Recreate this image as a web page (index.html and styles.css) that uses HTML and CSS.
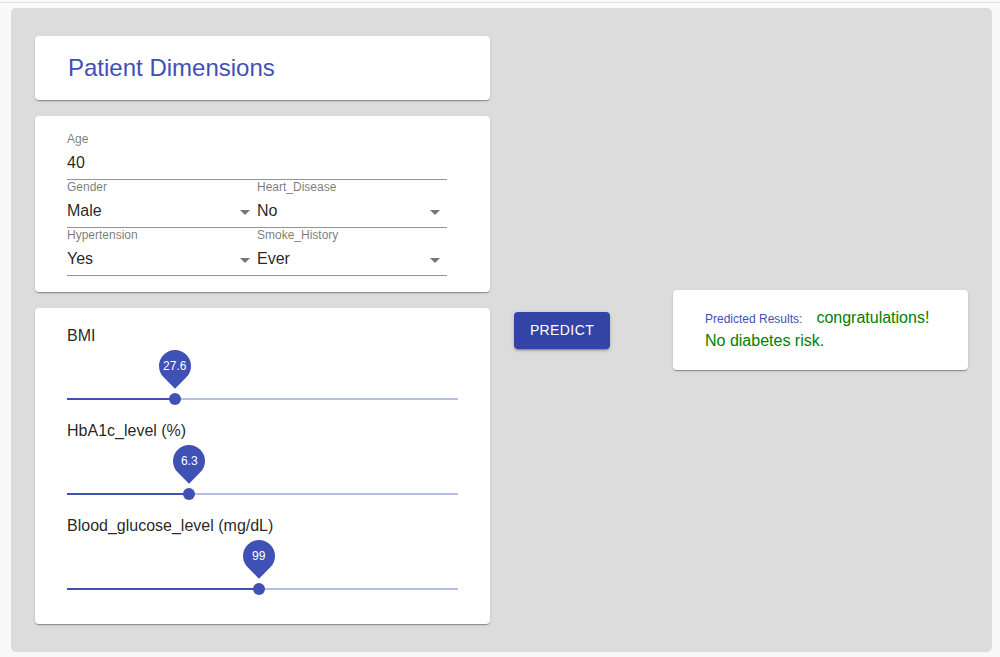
FILE: index.html
```html
<!DOCTYPE html>
<html>
<head>
<meta charset="utf-8">
<link rel="stylesheet" href="styles.css">
</head>
<body>
<div class="topbar"></div>
<div class="panel">
  <div class="left">
    <div class="card title-card">
      <h1 class="title">Patient Dimensions</h1>
    </div>
    <div class="card form-card">
      <div class="form">
        <div class="field">
          <div class="label">Age</div>
          <div class="input">40</div>
        </div>
        <div class="row">
          <div class="field select">
            <div class="label">Gender</div>
            <div class="input">Male<svg class="arrow" viewBox="0 0 24 24"><path d="M7 10l5 5 5-5z"/></svg></div>
          </div>
          <div class="field select">
            <div class="label">Heart_Disease</div>
            <div class="input">No<svg class="arrow" viewBox="0 0 24 24"><path d="M7 10l5 5 5-5z"/></svg></div>
          </div>
        </div>
        <div class="row">
          <div class="field select">
            <div class="label">Hypertension</div>
            <div class="input">Yes<svg class="arrow" viewBox="0 0 24 24"><path d="M7 10l5 5 5-5z"/></svg></div>
          </div>
          <div class="field select">
            <div class="label">Smoke_History</div>
            <div class="input">Ever<svg class="arrow" viewBox="0 0 24 24"><path d="M7 10l5 5 5-5z"/></svg></div>
          </div>
        </div>
      </div>
    </div>
    <div class="card slider-card">
      <div class="slider-label">BMI</div>
      <div class="slider">
        <div class="rail"></div>
        <div class="fill" style="width:27.6%"></div>
        <div class="thumb" style="left:27.6%"><div class="pin"><span>27.6</span></div></div>
      </div>
      <div class="slider-label">HbA1c_level (%)</div>
      <div class="slider">
        <div class="rail"></div>
        <div class="fill" style="width:31.2%"></div>
        <div class="thumb" style="left:31.2%"><div class="pin"><span>6.3</span></div></div>
      </div>
      <div class="slider-label">Blood_glucose_level (mg/dL)</div>
      <div class="slider">
        <div class="rail"></div>
        <div class="fill" style="width:49.1%"></div>
        <div class="thumb" style="left:49.1%"><div class="pin"><span>99</span></div></div>
      </div>
    </div>
  </div>
  <div class="right">
    <button class="predict">PREDICT</button>
    <div class="card result-card">
      <div class="result-line"><span class="result-label">Predicted Results:</span><span class="result-text">congratulations!</span></div>
      <div class="result-line"><span class="result-text">No diabetes risk.</span></div>
    </div>
  </div>
</div>
</body>
</html>
```
FILE: styles.css
```css
* { box-sizing: border-box; }
html, body { margin: 0; padding: 0; }
body {
  background: #f9f9f9;
  font-family: "Liberation Sans", Arial, Helvetica, sans-serif;
  color: rgba(0,0,0,0.87);
  width: 1000px;
  height: 657px;
  overflow: hidden;
}
.topbar {
  height: 3px;
  border-bottom: 1px solid #e1e1e1;
}
.panel {
  margin: 5px 8px 0 11px;
  height: 644px;
  background: #dcdcdc;
  border-radius: 5px;
  padding: 28px 24px 0 24px;
  display: flex;
  align-items: flex-start;
}
.left {
  width: 455px;
  display: flex;
  flex-direction: column;
  gap: 16px;
}
.card {
  background: #fff;
  border-radius: 4px;
  box-shadow: 0 2px 1px -1px rgba(0,0,0,0.2), 0 1px 1px 0 rgba(0,0,0,0.14), 0 1px 3px 0 rgba(0,0,0,0.12);
}
.title-card {
  height: 64px;
  display: flex;
  align-items: center;
  padding-left: 33px;
}
.title {
  margin: 0;
  font-size: 24px;
  font-weight: 400;
  color: #3f51b5;
  line-height: 28px;
}
.form-card {
  padding: 16px 32px 16px 32px;
}
.form { width: 380px; }
.row { display: flex; }
.row .field { width: 190px; }
.field {
  height: 48px;
  border-bottom: 1px solid rgba(0,0,0,0.42);
}
.label {
  height: 15px;
  font-size: 12px;
  line-height: 15px;
  color: rgba(0,0,0,0.54);
}
.input {
  position: relative;
  padding: 6px 0 7px 0;
  font-size: 16px;
  line-height: 19px;
  height: 32px;
}
.arrow {
  position: absolute;
  right: 0;
  top: 5px;
  width: 24px;
  height: 24px;
  fill: rgba(0,0,0,0.54);
}
.slider-card {
  padding: 16px 32px 15px 32px;
}
.slider-label {
  font-size: 16px;
  line-height: 24px;
  height: 24px;
}
.slider {
  position: relative;
  height: 71px;
}
.rail {
  position: absolute;
  left: 0;
  right: 0;
  top: 50px;
  height: 2px;
  background: #3f51b5;
  opacity: 0.38;
}
.fill {
  position: absolute;
  left: 0;
  top: 50px;
  height: 2px;
  background: #3f51b5;
}
.thumb {
  position: absolute;
  top: 45px;
  width: 12px;
  height: 12px;
  margin-left: -6px;
  border-radius: 50%;
  background: #3f51b5;
}
.pin {
  position: absolute;
  left: -10px;
  top: -43px;
  width: 32px;
  height: 32px;
  background: #3f51b5;
  border-radius: 50% 50% 50% 0;
  transform: rotate(-45deg);
  display: flex;
  align-items: center;
  justify-content: center;
}
.pin span {
  transform: rotate(45deg);
  color: #fff;
  font-size: 12px;
  line-height: 12px;
}
.right {
  margin-top: 254px;
  display: flex;
  align-items: center;
}
.predict {
  margin-left: 24px;
  width: 96px;
  height: 37px;
  border: none;
  border-radius: 4px;
  background: #3443a6;
  color: #fff;
  font-family: "Liberation Sans", Arial, sans-serif;
  font-size: 14px;
  letter-spacing: 0.4px;
  padding: 0;
  box-shadow: 0 3px 1px -2px rgba(0,0,0,0.2), 0 2px 2px 0 rgba(0,0,0,0.14), 0 1px 5px 0 rgba(0,0,0,0.12);
}
.result-card {
  margin-left: 63px;
  width: 295px;
  height: 80px;
  padding: 16px 32px;
}
.result-line {
  line-height: 24px;
  height: 23px;
}
.result-label {
  font-size: 12px;
  color: #3f51b5;
  margin-right: 14px;
}
.result-text {
  font-size: 16px;
  color: #008000;
}
```
